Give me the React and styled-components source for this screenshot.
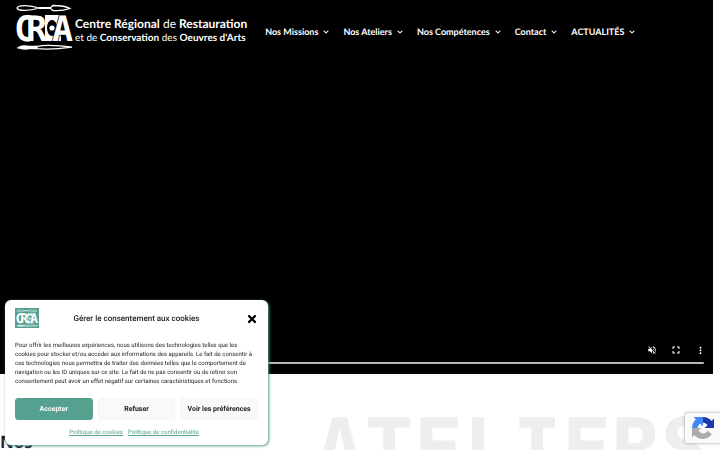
import { useState } from "react";
import styled, { createGlobalStyle } from "styled-components";
import { FaChevronDown, FaTimes } from "react-icons/fa";
import { MdVolumeOff, MdFullscreen, MdMoreVert } from "react-icons/md";

const GlobalStyle = createGlobalStyle`
    *{
        box-sizing:border-box;
    }
    body{
        margin:0;
        background:#fff;
        font-family:Roboto, "Liberation Sans", sans-serif;
        text-rendering:geometricPrecision;
        overflow:hidden;
    }
`;

const links = ["Nos Missions", "Nos Ateliers", "Nos Compétences", "Contact", "ACTUALITÉS"];

function LogoMark({ size, height, ground }) {
    return (
        <svg width={size} height={height} viewBox="0 0 58 46" role="img" aria-label="CRCA">
            <g fill="none" stroke="currentColor" strokeWidth="1.3">
                <path d="M2 4C3 0.500 15 1 24 4C15 7 3 7.500 2 4Z" />
                <path d="M24 4H36" strokeWidth="2" />
                <path d="M35 4L38 1.500C44 1.500 51 2 55 4.500C49 6.500 43 7 38 6.500Z" />
                <path d="M2 44C6 41 10 41 14 42L22 42V45L14 45C10 46 6 45 2 44Z" fill="currentColor" strokeWidth="0.500" />
                <path d="M22 42.300C30 41 44 41.500 57 43.200C44 45 30 45.500 22 44.700Z" />
            </g>
            <rect x="30" y="11" width="16" height="26" fill="currentColor" />
            <ellipse cx="37" cy="24" rx="5" ry="8" fill={ground} />
            <circle cx="37" cy="24" r="2.600" fill="currentColor" />
            <g fill="currentColor" fontFamily="'DejaVu Sans Mono', monospace" fontWeight="700" fontSize="35">
                <text x="-1" y="37">C</text>
                <text x="11" y="37">R</text>
                <text x="37" y="37" stroke={ground} strokeWidth="1.500" paintOrder="stroke">A</text>
            </g>
        </svg>
    )
}

function RecaptchaLogo() {
    return (
        <svg width="22" height="22" viewBox="0 0 64 64" aria-hidden="true">
            <path d="M64 31.955l-.033-1.37V4.687l-7.16 7.16C50.948 4.674 42.033.093 32.05.093c-10.4 0-19.622 4.96-25.458 12.64l11.736 11.86a15.55 15.55 0 0 1 4.754-5.334c2.05-1.6 4.952-2.906 8.968-2.906.485 0 .86.057 1.135.163 4.976.393 9.288 3.14 11.828 7.124l-8.307 8.307L64 31.953" fill="#1c3aa9" />
            <path d="M31.862.094l-1.37.033H4.594l7.16 7.16C4.58 13.147 0 22.06 0 32.046c0 10.4 4.96 19.622 12.64 25.458L24.5 45.768a15.55 15.55 0 0 1-5.334-4.754c-1.6-2.05-2.906-4.952-2.906-8.968 0-.485.057-.86.163-1.135.393-4.976 3.14-9.288 7.124-11.828l8.307 8.307L31.86.095" fill="#4285f4" />
            <path d="M.001 32.045l.033 1.37v25.898l7.16-7.16c5.86 7.173 14.774 11.754 24.76 11.754 10.4 0 19.622-4.96 25.458-12.64l-11.736-11.86a15.55 15.55 0 0 1-4.754 5.334c-2.05 1.6-4.952 2.906-8.968 2.906-.485 0-.86-.057-1.135-.163-4.976-.393-9.288-3.14-11.828-7.124l8.307-8.307c-10.522.04-22.4.066-27.295-.005" fill="#ababab" />
        </svg>
    )
}

function Header() {
    return (
        <Head>
            <Brand href="/">
                <LogoMark size={58} height={46} ground="#000" />
                <BrandText>
                    <BrandLine $size={12}><b>Centre Régional</b> de <b>Restauration</b></BrandLine>
                    <BrandLine $size={10}>et de <b>Conservation</b> des <b>Oeuvres d'Arts</b></BrandLine>
                </BrandText>
            </Brand>
            <Nav>
                {links.map((link) => (
                    <NavLink href="#" key={link}>{link}<FaChevronDown size={6} /></NavLink>
                ))}
            </Nav>
        </Head>
    )
}

function Cookies({ onClose }) {
    return (
        <Banner role="dialog" aria-labelledby="cookie-title">
            <BannerTop>
                <BannerLogo><LogoMark size={22} height={18} ground="#55a08f" /></BannerLogo>
                <BannerTitle id="cookie-title">Gérer le consentement aux cookies</BannerTitle>
                <Close aria-label="Fermer" onClick={onClose}><FaTimes size={12} /></Close>
            </BannerTop>
            <BannerText>
                Pour offrir les meilleures expériences, nous utilisons des technologies telles que les cookies pour stocker et/ou accéder aux informations des appareils. Le fait de consentir à ces technologies nous permettra de traiter des données telles que le comportement de navigation ou les ID uniques sur ce site. Le fait de ne pas consentir ou de retirer son consentement peut avoir un effet négatif sur certaines caractéristiques et fonctions.
            </BannerText>
            <Buttons>
                <Button $primary onClick={onClose}>Accepter</Button>
                <Button onClick={onClose}>Refuser</Button>
                <Button>Voir les préférences</Button>
            </Buttons>
            <Policies>
                <a href="#">Politique de cookies</a>
                <a href="#">Politique de confidentialité</a>
            </Policies>
        </Banner>
    )
}

function App() {
    const [open, setOpen] = useState(true);
    return (
        <>
            <GlobalStyle />
            <Page>
                <Hero>
                    <Header />
                    <Player>
                        <Controls>
                            <Control aria-label="Activer le son"><MdVolumeOff size={10} /></Control>
                            <Control aria-label="Plein écran"><MdFullscreen size={12} /></Control>
                            <Control aria-label="Plus d'options"><MdMoreVert size={11} /></Control>
                        </Controls>
                        <Progress type="range" aria-label="Progression de la vidéo" defaultValue="0" />
                    </Player>
                </Hero>
                <Workshops>
                    <Title>Nos</Title>
                    <Backdrop>ATELIERS</Backdrop>
                </Workshops>
            </Page>
            {open && <Cookies onClose={() => setOpen(false)} />}
            <Recaptcha><RecaptchaLogo /></Recaptcha>
        </>
    )
}

export default App



const Page=styled.main`
    padding-right:7px;
`;

const Hero=styled.section`
    display:flex;
    flex-direction:column;
    justify-content:space-between;
    min-height:374px;
    background:#000;
    color:#fff;
`;

const Head=styled.header`
    display:flex;
    align-items:center;
    padding:4px 15px;
`;

const Brand=styled.a`
    display:flex;
    align-items:center;
    gap:2px;
    color:#fff;
    text-decoration:none;
`;

const BrandText=styled.div`
    display:flex;
    flex-direction:column;
    padding-top:7px;
    font-family:Lato, sans-serif;
    line-height:14px;
    white-space:nowrap;
`;

const BrandLine=styled.span`
    font-size:${props=>props.$size}px;
    b{
        font-weight:700;
    }
`;

const Nav=styled.nav`
    display:flex;
    gap:14px;
    margin-left:18px;
    padding-top:9px;
`;

const NavLink=styled.a`
    display:flex;
    align-items:center;
    gap:5px;
    color:#fff;
    font-family:Lato, sans-serif;
    font-size:9px;
    font-weight:700;
    text-decoration:none;
    white-space:nowrap;
`;

const Player=styled.div`
    display:flex;
    flex-direction:column;
    gap:6px;
    padding:0 9px 10px;
`;

const Controls=styled.div`
    display:flex;
    justify-content:flex-end;
`;

const Control=styled.button`
    display:flex;
    align-items:center;
    justify-content:center;
    width:24px;
    height:12px;
    padding:0;
    border:none;
    background:none;
    color:#fff;
    cursor:pointer;
    &:last-child{
        margin-right:-8px;
    }
`;

const Progress=styled.input`
    appearance:none;
    width:100%;
    height:2px;
    margin:0;
    border-radius:1px;
    background:#b8b8b8;
    &::-webkit-slider-thumb{
        appearance:none;
        width:2px;
        height:2px;
        background:#fff;
    }
`;

const Workshops=styled.section`
    display:flex;
    align-items:flex-start;
    justify-content:space-between;
    padding:28px 3px 0 0;
`;

const Title=styled.h2`
    margin:0;
    padding-top:30px;
    color:#1b1b2b;
    font-family:"Open Sans", sans-serif;
    font-size:17px;
    line-height:20px;
`;

const Backdrop=styled.div`
    color:#eee;
    font-family:"DejaVu Sans Mono", monospace;
    font-size:82px;
    font-weight:700;
    line-height:96px;
`;

const Banner=styled.div`
    position:fixed;
    left:5px;
    bottom:5px;
    width:263px;
    padding:7px 10px 8px;
    border-radius:6px;
    background:#fff;
    color:#222;
    box-shadow:1px 1px 3px #55a08f;
`;

const BannerTop=styled.div`
    display:grid;
    grid-template-columns:24px 1fr 24px;
    align-items:center;
`;

const BannerLogo=styled.div`
    display:flex;
    align-items:center;
    justify-content:center;
    height:20px;
    background:#55a08f;
    color:#fff;
`;

const BannerTitle=styled.div`
    font-size:8px;
    font-weight:500;
    line-height:20px;
    padding-top:2px;
    text-align:center;
`;

const Close=styled.button`
    display:flex;
    justify-content:flex-end;
    padding:2px 0 0;
    border:none;
    background:none;
    color:#000;
    cursor:pointer;
`;

const BannerText=styled.p`
    margin:12px 0;
    font-size:6px;
    line-height:9px;
`;

const Buttons=styled.div`
    display:grid;
    grid-template-columns:repeat(3, 1fr);
    gap:5px;
`;

const Button=styled.button`
    height:22px;
    padding:0;
    border:1px solid ${props=>props.$primary? "#55a08f" :"#f6f6f6" };
    border-radius:3px;
    background:${props=>props.$primary? "#55a08f" :"#f9f9f9" };
    color:${props=>props.$primary? "#fff" :"#222" };
    font-family:inherit;
    font-size:7px;
    font-weight:700;
    text-rendering:inherit;
    white-space:nowrap;
    cursor:pointer;
`;

const Policies=styled.div`
    display:flex;
    justify-content:center;
    gap:5px;
    margin-top:8px;
    padding-right:5px;
    a{
        color:#55a08f;
        font-size:6px;
        line-height:9px;
    }
`;

const Recaptcha=styled.div`
    position:fixed;
    right:0;
    bottom:7px;
    display:flex;
    align-items:center;
    width:35px;
    height:30px;
    padding-left:7px;
    border-radius:2px 0 0 2px;
    background:#fafafa;
    box-shadow:0 0 3px #888;
`;
